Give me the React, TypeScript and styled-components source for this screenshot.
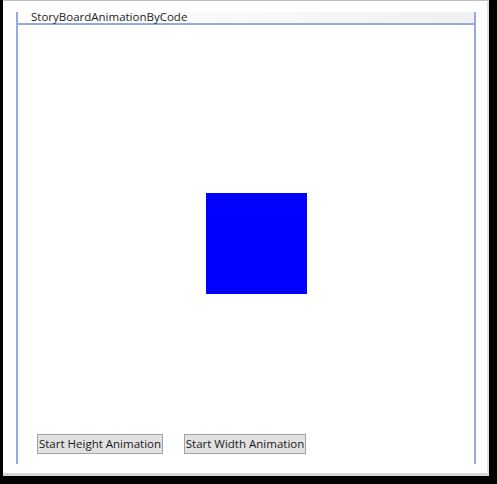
import React from "react";
import styled, { createGlobalStyle } from "styled-components";

const LINE_BLUE = `#92acdd`;
const UiFont = `"Open Sans", "Noto Sans", sans-serif`;

const GlobalStyle = createGlobalStyle`
  html, body {
    margin: 0;
    padding: 0;
    background: #000;
  }
  * {
    box-sizing: border-box;
  }
`;

const Screen = styled.div`
  width: 497px;
  height: 484px;
  background: #020202;
  overflow: hidden;
`;

const Frame = styled.div`
  margin-left: 3px;
  width: 486px;
  height: 476px;
  background: #fff;
  border-top: 1px solid #bdbdbd;
  border-bottom: 3px solid #d6d6d6;
  border-right: 2px solid #e2e2e2;
  padding-top: 11px;
  display: flex;
  flex-direction: column;
`;

const Panel = styled.div`
  margin-left: 13px;
  width: 460px;
  height: 452px;
  border-left: 2px solid ${LINE_BLUE};
  border-right: 2px solid ${LINE_BLUE};
  display: flex;
  flex-direction: column;
`;

const Header = styled.div`
  height: 13px;
  border-bottom: 2px solid ${LINE_BLUE};
  background: linear-gradient(to right, #ffffff 0%, #fafafa 40%, #f1f1f1 100%);
  padding-left: 13px;
  font-family: ${UiFont};
  font-size: 11.5px;
  line-height: 11px;
  color: #1e1e1e;
  white-space: nowrap;
`;

const Title = styled.span`
  position: relative;
  top: -1px;
`;

const Stage = styled.div`
  flex: 1;
  display: flex;
  flex-direction: column;
`;

const Square = styled.div`
  width: 101px;
  height: 101px;
  margin-top: 168px;
  margin-left: 188px;
  background: #0000ff;
`;

const ButtonRow = styled.div`
  margin-top: auto;
  padding: 0 0 10px 19px;
  display: flex;
  gap: 21px;
`;

const Button = styled.button<{ $width: number }>`
  width: ${(p) => p.$width}px;
  height: 20px;
  padding: 0;
  background: #e1e1e1;
  border: 1px solid #a3a3a3;
  border-radius: 0;
  font-family: ${UiFont};
  font-size: 11.5px;
  color: #1a1a1a;
  line-height: 18px;
`;

const App: React.FC = () => {
  return (
    <Screen>
      <GlobalStyle />
      <Frame>
        <Panel>
          <Header>
            <Title>StoryBoardAnimationByCode</Title>
          </Header>
          <Stage>
            <Square />
            <ButtonRow>
              <Button $width={126}>Start Height Animation</Button>
              <Button $width={122}>Start Width Animation</Button>
            </ButtonRow>
          </Stage>
        </Panel>
      </Frame>
    </Screen>
  );
};

export default App;
